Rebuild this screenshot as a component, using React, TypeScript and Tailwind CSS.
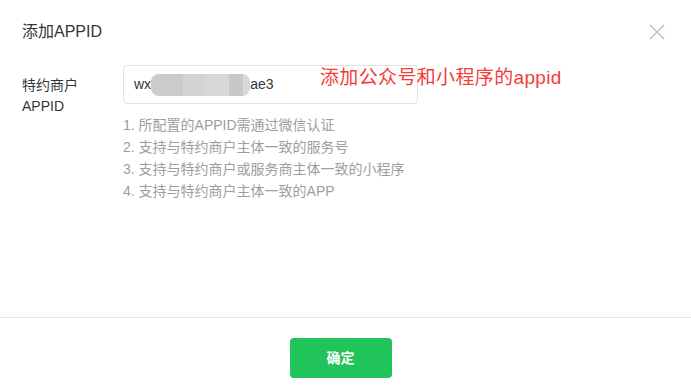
import React from "react";

export default function App() {
  const font = { fontFamily: '"Liberation Sans", "Noto Sans CJK SC", sans-serif' };
  return (
    <div
      className="relative w-[691px] h-[390px] bg-white flex flex-col overflow-hidden"
      style={font}
    >
      {/* Header */}
      <div className="h-[64px] flex items-center justify-between pl-[22px] pr-[26px]">
        <div className="text-[16px] leading-[22px] text-[#353535]">添加APPID</div>
        <button className="w-[16px] h-[16px] flex items-center justify-center">
          <svg width="16" height="16" viewBox="0 0 16 16">
            <path d="M1 1 L15 15 M15 1 L1 15" stroke="#c4c4c4" strokeWidth="1.6" />
          </svg>
        </button>
      </div>

      {/* Body */}
      <div className="h-[253px] pt-[1px] pl-[22px] flex">
        <div className="w-[101px] pt-[10px] text-[14px] leading-[21px] text-[#353535]">
          <div>特约商户</div>
          <div>APPID</div>
        </div>
        <div className="flex flex-col">
          <div className="w-[295px] h-[39px] border border-[#e2e2e2] rounded-[4px] pl-[10px] flex items-center text-[14px] text-[#353535]">
            <span>wx</span>
            <span className="flex h-[22px] w-[99px] rounded-[8px] overflow-hidden">
              <span className="w-[32px] bg-[#cbcbcb]" />
              <span className="w-[22px] bg-[#d4d4d4]" />
              <span className="w-[24px] bg-[#d8d8d8]" />
              <span className="w-[14px] bg-[#c8c8c8]" />
              <span className="w-[7px] bg-[#d9d9d9]" />
            </span>
            <span>ae3</span>
          </div>
          <div className="mt-[10px] text-[14px] leading-[22px] text-[#9e9e9e]">
            <div>1. 所配置的APPID需通过微信认证</div>
            <div>2. 支持与特约商户主体一致的服务号</div>
            <div>3. 支持与特约商户或服务商主体一致的小程序</div>
            <div>4. 支持与特约商户主体一致的APP</div>
          </div>
        </div>
      </div>

      {/* Footer */}
      <div className="border-t border-[#e8e8e8] flex justify-center pt-[20px] pr-[10px]">
        <button className="w-[102px] h-[40px] rounded-[4px] bg-[#21c45a] text-white text-[14px] font-bold">
          确定
        </button>
      </div>

      {/* Annotation */}
      <div className="absolute left-[320px] top-[65px] text-[19px] leading-[26px] tracking-[0.35px] text-[#f43c3c]">
        添加公众号和小程序的appid
      </div>
    </div>
  );
}
